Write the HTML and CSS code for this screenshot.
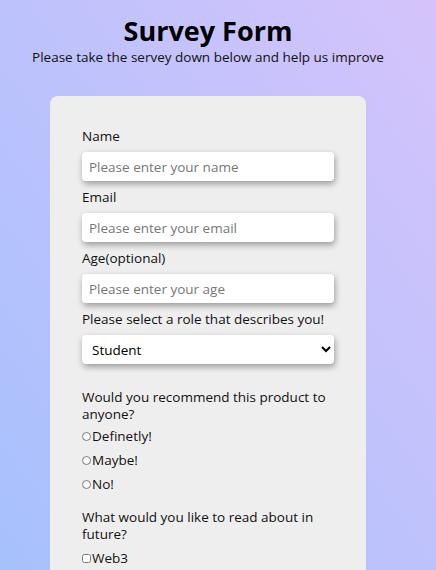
FILE: index.html
```html
<!DOCTYPE html>
<html lang="en">
<head>
<meta charset="utf-8">
<title>Survey Form</title>
<link rel="stylesheet" href="styles.css">
</head>
<body>
<header class="head">
  <h1 class="title">Survey Form</h1>
  <p class="subtitle">Please take the servey down below and help us improve</p>
</header>
<main class="card">
  <form class="form">
    <label class="label" for="name">Name</label>
    <input class="field" id="name" type="text" placeholder="Please enter your name">
    <label class="label" for="email">Email</label>
    <input class="field" id="email" type="email" placeholder="Please enter your email">
    <label class="label" for="age">Age(optional)</label>
    <input class="field" id="age" type="number" placeholder="Please enter your age">
    <label class="label" for="role">Please select a role that describes you!</label>
    <select class="field select" id="role">
      <option>Student</option>
      <option>Full time job</option>
      <option>Other</option>
    </select>
    <p class="question">Would you recommend this product to anyone?</p>
    <label class="choice first"><input class="radio" type="radio" name="rec">Definetly!</label>
    <label class="choice"><input class="radio" type="radio" name="rec">Maybe!</label>
    <label class="choice"><input class="radio" type="radio" name="rec">No!</label>
    <p class="question q2">What would you like to read about in future?</p>
    <label class="choice"><input class="check" type="checkbox">Web3</label>
  </form>
</main>
</body>
</html>
```
FILE: styles.css
```css
html, body {
  margin: 0;
  padding: 0;
}
body {
  min-height: 570px;
  background: linear-gradient(to top right, #a5c1fd, #d5c3fb);
  font-family: "Open Sans", "Noto Sans", sans-serif;
  color: #111;
  overflow: hidden;
}
.head {
  width: 416px;
  text-align: center;
  padding-top: 14px;
}
.title {
  margin: 0;
  font-size: 27px;
  line-height: 34px;
  font-weight: 700;
  color: #000;
}
.subtitle {
  margin: 0;
  font-size: 13.5px;
  line-height: 18px;
}
.card {
  box-sizing: border-box;
  width: 316px;
  margin: 30px 0 0 50px;
  background: #eeeeee;
  border-radius: 8px;
  padding: 32px 32px 40px;
  min-height: 500px;
}
.form {
  display: flex;
  flex-direction: column;
}
.label {
  font-size: 13.5px;
  line-height: 17px;
}
.field {
  box-sizing: border-box;
  height: 29px;
  width: 252px;
  margin: 7px 0 8px;
  border: none;
  border-radius: 4px;
  background: #fff;
  box-shadow: 1px 3px 6px rgba(0, 0, 0, 0.35);
  padding: 0 7px;
  font-family: inherit;
  font-size: 13.5px;
  color: #000;
  outline: none;
}
.field::placeholder {
  color: #777;
}
.select {
  padding: 0 4px 0 6px;
}
.question {
  margin: 17px 0 0;
  font-size: 13.5px;
  line-height: 17px;
  width: 250px;
}
.q2 {
  margin-top: 16px;
}
.choice {
  display: flex;
  align-items: center;
  font-size: 13.5px;
  line-height: 17px;
  margin-top: 7px;
}
.choice.first {
  margin-top: 5px;
}
.radio, .check {
  width: 9px;
  height: 9px;
  margin: 0 1px 0 0;
}
```
